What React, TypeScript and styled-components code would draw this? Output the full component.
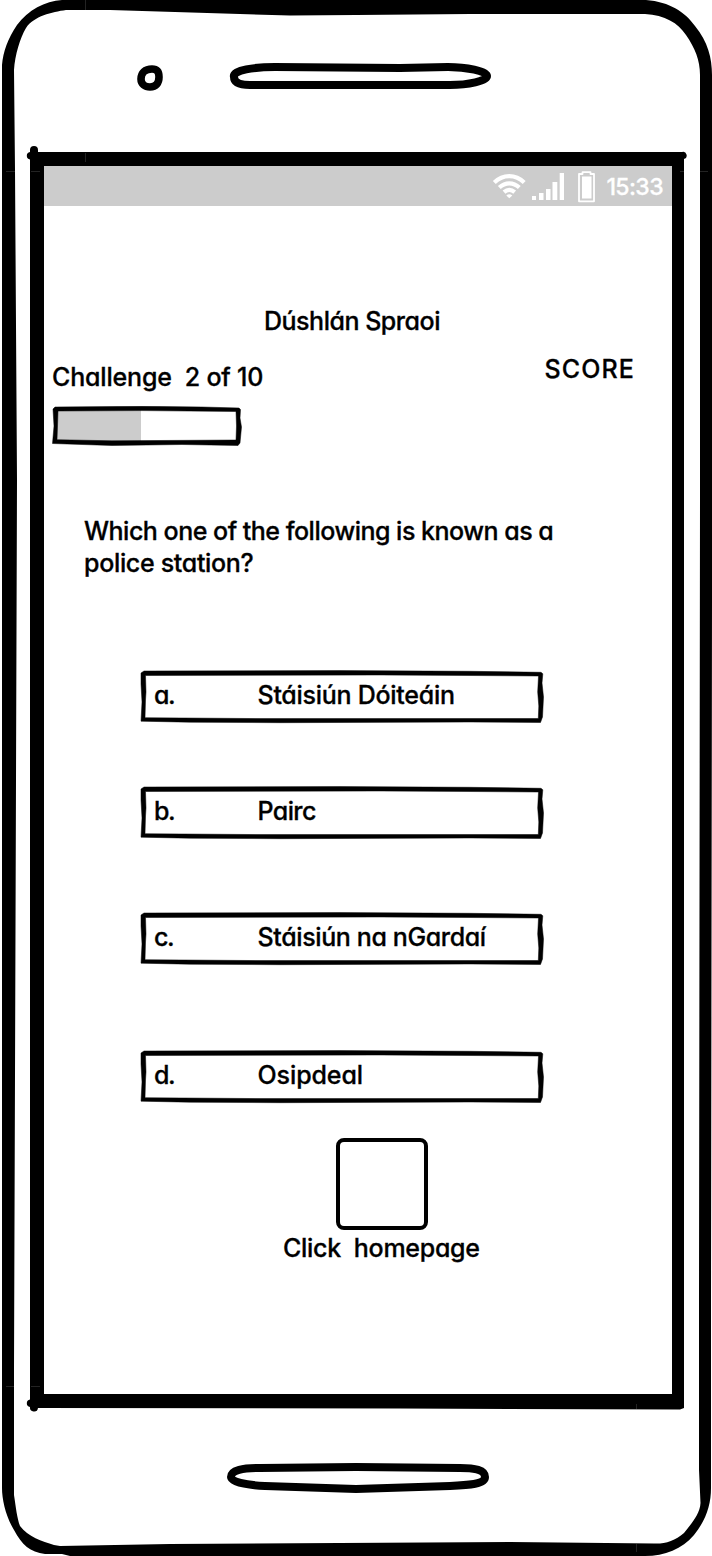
import React from "react";
import styled, { createGlobalStyle } from "styled-components";

const GlobalStyle = createGlobalStyle`
  * { box-sizing: border-box; }
  body { margin: 0; background: #fff; }
`;

const Phone = styled.div`
  position: relative;
  width: 712px;
  height: 1556px;
  padding: 166px 40px 162px 44px;
  background: #fff;
  overflow: hidden;
  color: #000;
  font-family: Inter, "Liberation Sans", sans-serif;
  font-size: 25px;
  font-weight: 500;
  line-height: 32px;
  font-feature-settings: "cv11", "ss03", "calt" 0;
  -webkit-text-stroke: 0.3px currentColor;
`;

const Casing = styled.svg`
  position: absolute;
  inset: 0;
  pointer-events: none;
`;

const Screen = styled.main`
  height: 1228px;
  display: flex;
  flex-direction: column;
  background: #fff;
`;

const StatusBar = styled.header`
  height: 40px;
  display: flex;
  align-items: center;
  justify-content: flex-end;
  padding-right: 9px;
  background: #ccc;
  color: #fff;
`;

const Text = styled.span<{ $track?: number }>`
  white-space: pre;
  letter-spacing: ${(p) => p.$track ?? 0}px;
`;

const Clock = styled(Text)`
  font-size: 23px;
  line-height: 40px;
  padding: 2px 0 0 1px;
`;

const Title = styled.h1`
  margin: 99px 0 0 220px;
  font: inherit;
  font-feature-settings: inherit;
`;

const Summary = styled.section`
  display: flex;
  justify-content: space-between;
  padding: 16px 37px 0 8px;
`;

const Progress = styled.div`
  display: flex;
  flex-direction: column;
  gap: 13px;
  padding-top: 8px;
`;

const Question = styled.p`
  margin: 69px 0 0 40px;
  display: flex;
  flex-direction: column;
`;

const Answers = styled.div`
  padding: 91px 0 0 96px;
  display: flex;
  flex-direction: column;
`;

const Answer = styled.button<{ $gap: number }>`
  position: relative;
  display: flex;
  align-items: center;
  width: 405px;
  height: 54px;
  margin: 0 0 ${(p) => p.$gap}px;
  padding: 0 0 5px 14px;
  border: 0;
  background: none;
  color: inherit;
  font: inherit;
  font-feature-settings: inherit;
  text-align: left;
`;

const Outline = styled.svg`
  position: absolute;
  inset: 0;
  overflow: visible;
`;

const Letter = styled.span`
  width: 103.5px;
  letter-spacing: -1.4px;
`;

const Home = styled.div`
  width: 200px;
  margin-left: 239px;
  display: flex;
  flex-direction: column;
`;

const HomeButton = styled.button`
  width: 92px;
  height: 92px;
  margin: 0 0 2px 53px;
  border: 4px solid #000;
  border-radius: 8px;
  background: #fff;
`;

const answers = [
  { id: "a.", label: "Stáisiún Dóiteáin", gap: 62, track: -0.27 },
  { id: "b.", label: "Pairc", gap: 72, track: -0.6 },
  { id: "c.", label: "Stáisiún na nGardaí", gap: 84, track: -0.38 },
  { id: "d.", label: "Osipdeal", gap: 34, track: -0.1 },
];

function PhoneCasing() {
  return (
    <Casing width="712" height="1556" viewBox="0 0 712 1556">
      <path
        fillRule="evenodd"
        d="M2 65C3 52 8 38 17 25C28 10 45 1 62 0H646C670 2 685 12 695 26C708 42 712 58 712 75V600L711 1300V1488C711 1505 706 1520 694 1535C682 1549 665 1556 645 1556H70L62 1554H45C30 1552 22 1545 14 1530C6 1517 2 1500 2 1488Z
        M14 70C15 55 20 38 26 28C34 16 52 12 66 10H110L290 15.5L356 15L470 14H645C665 15 678 23 686 35C695 48 700 60 700 75V500L699 1300V1470L700.5 1503C700 1515 690 1525 684 1533C675 1541 665 1544 654 1543.5L510 1542L170 1544L60 1546L54 1545C42 1541 28 1537 20 1526C17 1518 16 1508 14 1495V1370L16 780L17 480L15 170Z"
      />
      <path
        fillRule="evenodd"
        d="M30 152V150A4 4 0 0 1 38 150V152H682A3.500 3.500 0 0 1 684 159V1408L680 1409.5L400 1408.5L38 1408A4 4 0 0 1 30 1407A3.800 3.800 0 0 1 30 1399.500V159.500A3.800 3.800 0 0 1 30 152ZM44 166V1394H672V166Z"
      />
      <path
        stroke="#fff"
        strokeOpacity="0.2"
        strokeWidth="0.7"
        d="M6 171.500H15M31 171.500H40M680 171.500H684M700 171.500H708M6 1386.500H14M31 1386.500H40M85.500 0V10M85.500 153V162M636.500 1404V1409M636.500 1544V1552"
      />
      <g fill="none" stroke="#000" strokeWidth="8">
        <path d="M152 69C145 69 141 73 141 79C141 84 145 87 150 87C156 87 159 83 159 77C159 72 157 69 152 69Z" strokeWidth="7.600" />
        <path d="M234 77C232 70 255 67 275 67L400 68L448 67C466 67 487 71 487 76C487 81 468 85 450 85H250C240 85 234 83 234 77Z" />
        <path d="M231 1477C231 1470 243 1468 260 1468L356 1467L460 1468C475 1468 485 1470 485 1477C485 1484 470 1485 450 1486L356 1489L265 1486C245 1485 231 1482 231 1477Z" />
      </g>
    </Casing>
  );
}

function StatusIcons() {
  return (
    <svg width="114" height="40" viewBox="0 0 114 40" fill="none" stroke="#fff">
      <g strokeWidth="4.200">
        <path d="M3.300 16.500C12 8 24.500 8 33.200 16.500" />
        <path d="M8.300 21.500C14.300 16 22.300 16 28.300 21.500" />
        <path d="M13 26.200C16.300 23.300 20.300 23.300 23.700 26.200" />
      </g>
      <path fill="#fff" stroke="none" d="M15.300 29.500Q18.300 27 21.300 29.500L18.300 32.300ZM41 30h4v4h-4zM48 27h4.500v7h-4.500zM55 23h4.500v11h-4.500zM61.500 16h4.800v18h-4.800zM68.700 7h4.300v27h-4.300zM91 10.500h9.500v22h-9.500z" />
      <path strokeWidth="1.800" strokeLinejoin="round" d="M91.500 8V6.200H99.500V8H103V35.300H88V8Z" />
    </svg>
  );
}

function ProgressBar() {
  return (
    <svg width="190" height="40" viewBox="0 0 190 40">
      <path fill="#ccc" d="M4 4H89V36H4Z" />
      <path
        fillRule="evenodd"
        stroke="#000"
        strokeWidth="0.500"
        d="M1 3L3 1L90 0.300L150 1L187 2L188.500 3.500L188 12L189.500 21L188 37L186 39.500L130 38.500L60 39.500L0.500 37.500L2 20ZM6 5L5.500 20L5 33.700L60 34.800L184 34L184.500 20L184 5.500L90 4.600Z"
      />
    </svg>
  );
}

function AnswerOutline() {
  return (
    <Outline width="405" height="54" viewBox="0 0 405 54">
      <path
        fillRule="evenodd"
        stroke="#000"
        strokeWidth="0.500"
        d="M1 3L4 1L200 0.600L330 1.300L401 2.300L402.800 3.800L402 13L403.500 27L402.500 47L400.500 52.500L330 52L140 52.700L50 52.200L1 51.200L2 32L1 14ZM5.500 5.500L6 22L5.500 30L5 47.700L120 48.600L398.300 48.500L398.800 36L397.700 22L398.500 6L330 5.500L240 5Z"
      />
    </Outline>
  );
}

export default function App() {
  return (
    <>
      <GlobalStyle />
      <Phone>
        <PhoneCasing />
        <Screen>
          <StatusBar>
            <StatusIcons />
            <Clock $track={-0.6}>15:33</Clock>
          </StatusBar>
          <Title>
            <Text $track={-0.48}>Dúshlán Spraoi</Text>
          </Title>
          <Summary>
            <Progress>
              <Text $track={-0.18}>Challenge  2 of 10</Text>
              <ProgressBar />
            </Progress>
            <Text $track={1.1}>SCORE</Text>
          </Summary>
          <Question>
            <Text $track={-0.5}>Which one of the following is known as a</Text>
            <Text $track={-0.32}>police station?</Text>
          </Question>
          <Answers>
            {answers.map((a) => (
              <Answer key={a.id} $gap={a.gap}>
                <AnswerOutline />
                <Letter>{a.id}</Letter>
                <Text $track={a.track}>{a.label}</Text>
              </Answer>
            ))}
          </Answers>
          <Home>
            <HomeButton aria-label="Homepage" />
            <Text $track={-0.27}>Click  homepage</Text>
          </Home>
        </Screen>
      </Phone>
    </>
  );
}
